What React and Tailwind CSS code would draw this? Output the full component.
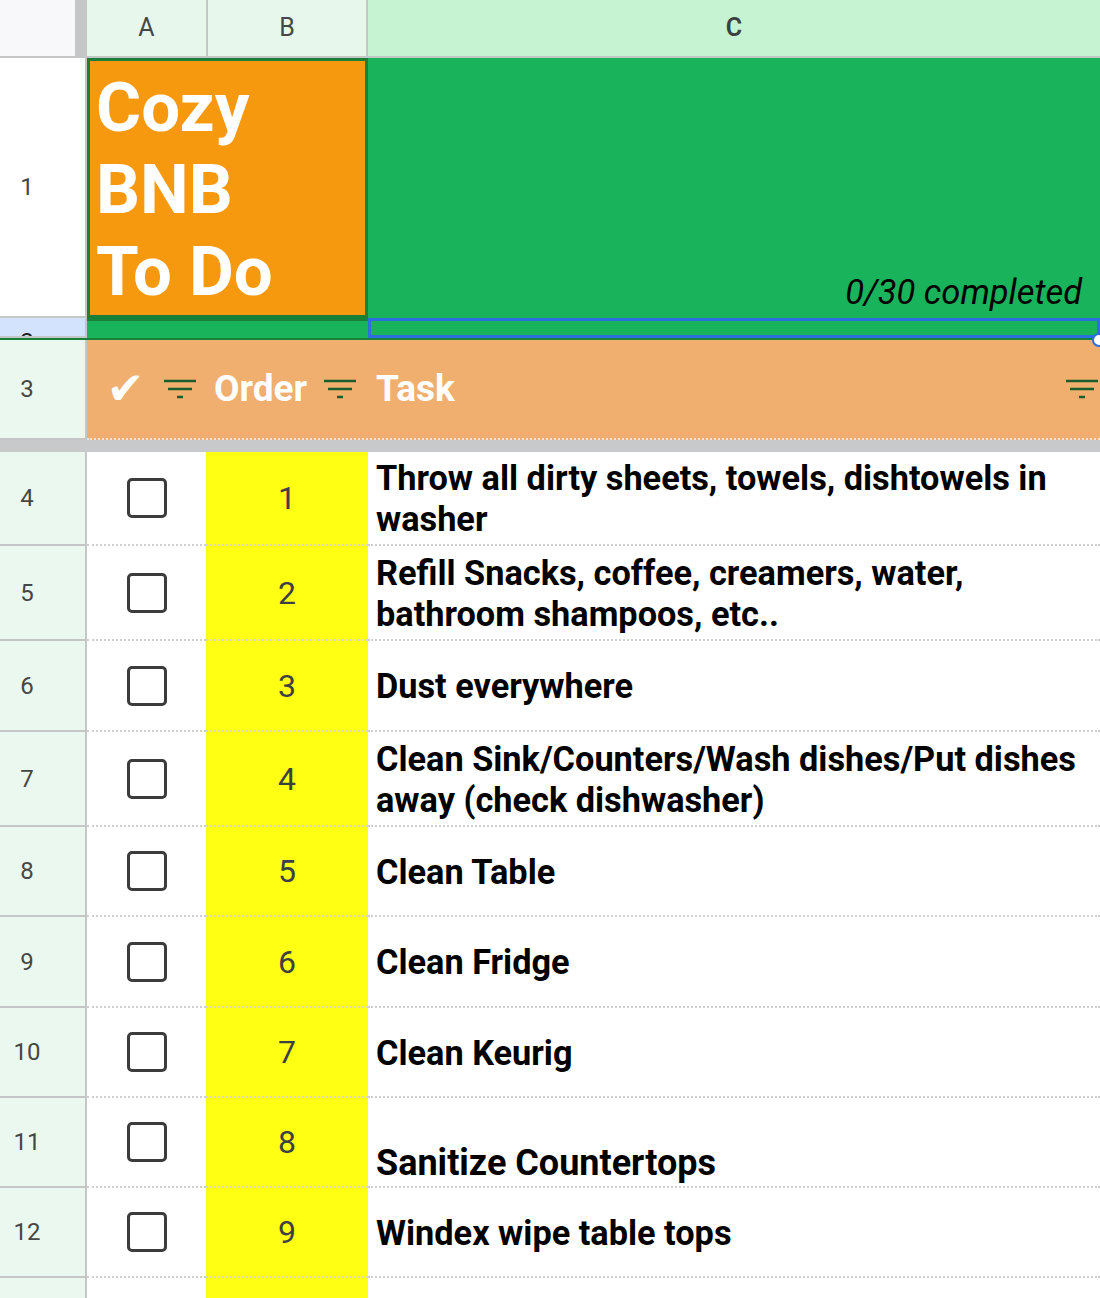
import React from 'react';

const tasks = [
    { h: 'h-[94px]', n: 1, text: 'Throw all dirty sheets, towels, dishtowels in washer' },
    { h: 'h-[95px]', n: 2, text: 'Refill Snacks, coffee, creamers, water, bathroom shampoos, etc..' },
    { h: 'h-[91px]', n: 3, text: 'Dust everywhere' },
    { h: 'h-[95px]', n: 4, text: 'Clean Sink/Counters/Wash dishes/Put dishes away (check dishwasher)' },
    { h: 'h-[90px]', n: 5, text: 'Clean Table' },
    { h: 'h-[91px]', n: 6, text: 'Clean Fridge' },
    { h: 'h-[90px]', n: 7, text: 'Clean Keurig' },
    { h: 'h-[90px]', n: 8, text: 'Sanitize Countertops', bottom: true },
    { h: 'h-[90px]', n: 9, text: 'Windex wipe table tops' },
];

function FilterIcon() {
    return (
        <svg width="32" height="20" viewBox="0 0 32 20" className="shrink-0">
            <g stroke="#1b5e2c" strokeWidth="2.5" strokeLinecap="butt">
                <line x1="0" y1="2" x2="32" y2="2" />
                <line x1="4" y1="10" x2="28" y2="10" />
                <line x1="13" y1="18" x2="19" y2="18" />
            </g>
        </svg>
    );
}

function RowHeader({ label, className = '' }) {
    return (
        <div className={`w-[87px] shrink-0 border-r-2 border-b-2 border-[#c4c7c5] flex items-center ${className}`}>
            <span className="w-[54px] text-center text-[24px] text-[#444746]">{label}</span>
        </div>
    );
}

export default function App() {
    return (
        <div className="relative w-[1100px] h-[1298px] overflow-hidden bg-white font-['Roboto','Liberation_Sans',sans-serif]">

            {/* column headers */}
            <div className="flex h-[58px] border-b-2 border-[#c4c7c5]">
                <div className="w-[75px] bg-[#f8f8fb]"></div>
                <div className="w-[12px] bg-[#c4c7c5]"></div>
                <div className="w-[121px] bg-[#e7f7ec] border-r-2 border-[#c4c7c5] flex items-center justify-center text-[25px] text-[#444746]">A</div>
                <div className="w-[160px] bg-[#e7f7ec] border-r-2 border-[#c4c7c5] flex items-center justify-center text-[25px] text-[#444746]">B</div>
                <div className="flex-1 bg-[#c6f4d3] flex items-center justify-center text-[25px] font-semibold text-[#3c4043]">C</div>
            </div>

            {/* row 1 */}
            <div className="flex h-[260px]">
                <RowHeader label="1" className="bg-white" />
                <div className="w-[281px] bg-[#f7990f] border-[3px] border-[#188038] pl-[6px] pt-[6px] text-white font-bold text-[69px] leading-[82px]">
                    <div>Cozy</div>
                    <div>BNB</div>
                    <div>To Do</div>
                </div>
                <div className="flex-1 bg-[#19b35b] flex items-end justify-end pr-[18px] pb-[6px]">
                    <span className="italic text-[34.5px] leading-[40px] text-black">0/30 completed</span>
                </div>
            </div>

            {/* row 2 */}
            <div className="flex h-[20px]">
                <div className="w-[87px] shrink-0 bg-[#d3e3fd] border-r-2 border-b-2 border-[#c4c7c5] overflow-hidden">
                    <div className="w-[54px] text-center text-[24px] leading-[28px] text-[#1f1f1f] pt-[10px]">2</div>
                </div>
                <div className="w-[281px] bg-[#19b35b] border-t-[3px] border-[#188038]"></div>
                <div className="flex-1 bg-[#19b35b] border-[3px] border-[#2b6fe2]"></div>
            </div>

            {/* row 3: table header */}
            <div className="flex h-[102px] border-t-2 border-[#188038]">
                <RowHeader label="3" className="bg-[#ebf8ef] border-b-0" />
                <div className="flex-1 flex bg-[#f0ae6f] border-b-2 border-dotted border-[#f7e3cf] text-white font-bold text-[37px]">
                    <div className="w-[121px] flex items-center pr-[12px]">
                        <span className="flex-1 text-center font-['DejaVu_Sans',sans-serif] text-[45px] leading-[46px]">✔</span>
                        <FilterIcon />
                    </div>
                    <div className="w-[160px] flex items-center pr-[12px]">
                        <span className="flex-1 pl-[6px]">Order</span>
                        <FilterIcon />
                    </div>
                    <div className="flex-1 flex items-center pl-[8px] pr-[2px]">
                        <span className="flex-1">Task</span>
                        <FilterIcon />
                    </div>
                </div>
            </div>

            {/* frozen divider */}
            <div className="h-[12px] bg-[#c8c9cb]"></div>

            {/* task rows */}
            {tasks.map((t) => (
                <div key={t.n} className={`flex ${t.h}`}>
                    <RowHeader label={String(t.n + 3)} className="bg-[#ebf8ef]" />
                    <div className="w-[119px] bg-white border-b-2 border-dotted border-[#cfcfcf] flex items-center justify-center">
                        <div className="w-[40px] h-[40px] border-[3px] border-[#3c3c3c] rounded-[5px]"></div>
                    </div>
                    <div className="w-[162px] bg-[#ffff14] border-b-2 border-dotted border-[#d9d9c8] flex items-center justify-center text-[32px] text-[#3c4043]">
                        {t.n}
                    </div>
                    <div className={`flex-1 bg-white border-b-2 border-dotted border-[#cfcfcf] flex pl-[8px] pr-[6px] ${t.bottom ? 'items-end pb-[2px]' : 'items-center pt-[2px]'}`}>
                        <span className={`font-bold leading-[41px] text-black ${t.bottom ? 'text-[36px]' : 'text-[34.3px]'}`}>{t.text}</span>
                    </div>
                </div>
            ))}

            {/* row 13 (partial) */}
            <div className="flex h-[40px]">
                <div className="w-[87px] shrink-0 border-r-2 border-[#c4c7c5] bg-[#ebf8ef]"></div>
                <div className="w-[119px] bg-white"></div>
                <div className="w-[162px] bg-[#ffff14]"></div>
                <div className="flex-1 bg-white"></div>
            </div>

            {/* selection handle */}
            <div className="absolute left-[1092px] top-[333px] w-[14px] h-[14px] rounded-full bg-white border-2 border-[#2b6fe2]"></div>
        </div>
    );
}
